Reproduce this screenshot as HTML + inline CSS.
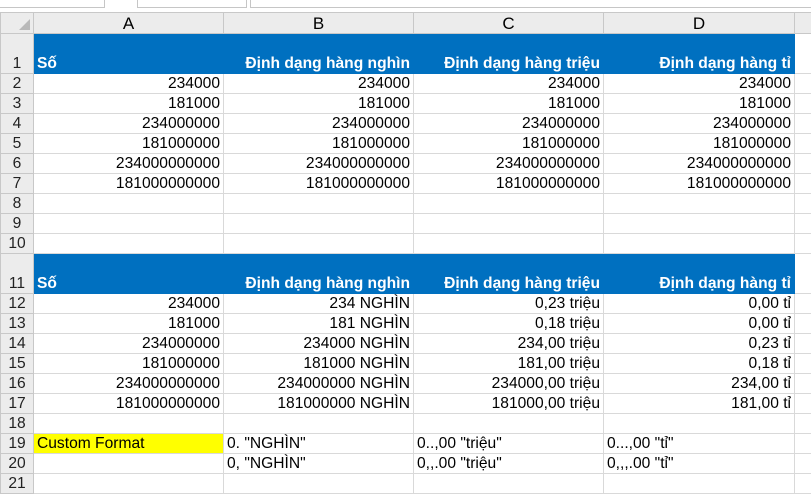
<!DOCTYPE html>
<html><head><meta charset="utf-8"><style>
body{margin:0;width:811px;height:496px;overflow:hidden;background:#fff;font-family:"Liberation Sans",Arial,sans-serif;font-size:15.6px;color:#000;position:relative}
.top{position:absolute;left:0;top:0;width:811px;height:12px;background:#fff;border-bottom:1px solid #bdbdbd}
.top div{position:absolute;top:-2px;height:8px;border:1px solid #c6c6c6;background:#fff}
table{position:absolute;left:0;top:12px;border-collapse:collapse;table-layout:fixed;width:812px}
td{border:1px solid #d9d9d9;padding:0 3px;height:19px;white-space:nowrap;overflow:hidden;line-height:19px;vertical-align:bottom}
td.rh{background:#ececec;text-align:center;color:#222;border-color:#c8c8c8;padding:0}
tr.ch td{background:#ececec;text-align:center;border-color:#c8c8c8;height:20px;font-size:17px;vertical-align:middle}
tr.ch td.corner{position:relative}
.corner:after{content:"";position:absolute;right:3px;bottom:3px;border-style:solid;border-width:0 0 11px 11px;border-color:transparent transparent #b9b9b9 transparent}
tr.blue td.b{background:#0070c0;color:#fff;font-weight:bold;border-color:#0070c0;text-align:right}
tr.blue td{height:39px}
td.r{text-align:right}
td.y{background:#ffff00}
</style></head><body>
<div class="top"><div style="left:-2px;width:105px"></div><div style="left:137px;width:108px"></div><div style="left:250px;width:560px"></div></div>
<table>
<colgroup><col style="width:33px"><col style="width:190px"><col style="width:190px"><col style="width:190px"><col style="width:191px"><col style="width:18px"></colgroup>
<tr class="ch"><td class="corner"></td><td>A</td><td>B</td><td>C</td><td>D</td><td></td></tr>
<tr class="blue"><td class="rh">1</td><td class="b" style="text-align:left">Số</td><td class="b">Định dạng hàng nghìn</td><td class="b">Định dạng hàng triệu</td><td class="b">Định dạng hàng tỉ</td><td></td></tr>
<tr><td class="rh">2</td><td class="r">234000</td><td class="r">234000</td><td class="r">234000</td><td class="r">234000</td><td></td></tr>
<tr><td class="rh">3</td><td class="r">181000</td><td class="r">181000</td><td class="r">181000</td><td class="r">181000</td><td></td></tr>
<tr><td class="rh">4</td><td class="r">234000000</td><td class="r">234000000</td><td class="r">234000000</td><td class="r">234000000</td><td></td></tr>
<tr><td class="rh">5</td><td class="r">181000000</td><td class="r">181000000</td><td class="r">181000000</td><td class="r">181000000</td><td></td></tr>
<tr><td class="rh">6</td><td class="r">234000000000</td><td class="r">234000000000</td><td class="r">234000000000</td><td class="r">234000000000</td><td></td></tr>
<tr><td class="rh">7</td><td class="r">181000000000</td><td class="r">181000000000</td><td class="r">181000000000</td><td class="r">181000000000</td><td></td></tr>
<tr><td class="rh">8</td><td></td><td></td><td></td><td></td><td></td></tr>
<tr><td class="rh">9</td><td></td><td></td><td></td><td></td><td></td></tr>
<tr><td class="rh">10</td><td></td><td></td><td></td><td></td><td></td></tr>
<tr class="blue"><td class="rh">11</td><td class="b" style="text-align:left">Số</td><td class="b">Định dạng hàng nghìn</td><td class="b">Định dạng hàng triệu</td><td class="b">Định dạng hàng tỉ</td><td></td></tr>
<tr><td class="rh">12</td><td class="r">234000</td><td class="r">234 NGHÌN</td><td class="r">0,23 triệu</td><td class="r">0,00 tỉ</td><td></td></tr>
<tr><td class="rh">13</td><td class="r">181000</td><td class="r">181 NGHÌN</td><td class="r">0,18 triệu</td><td class="r">0,00 tỉ</td><td></td></tr>
<tr><td class="rh">14</td><td class="r">234000000</td><td class="r">234000 NGHÌN</td><td class="r">234,00 triệu</td><td class="r">0,23 tỉ</td><td></td></tr>
<tr><td class="rh">15</td><td class="r">181000000</td><td class="r">181000 NGHÌN</td><td class="r">181,00 triệu</td><td class="r">0,18 tỉ</td><td></td></tr>
<tr><td class="rh">16</td><td class="r">234000000000</td><td class="r">234000000 NGHÌN</td><td class="r">234000,00 triệu</td><td class="r">234,00 tỉ</td><td></td></tr>
<tr><td class="rh">17</td><td class="r">181000000000</td><td class="r">181000000 NGHÌN</td><td class="r">181000,00 triệu</td><td class="r">181,00 tỉ</td><td></td></tr>
<tr><td class="rh">18</td><td></td><td></td><td></td><td></td><td></td></tr>
<tr><td class="rh">19</td><td class="y">Custom Format</td><td>0. "NGHÌN"</td><td>0..,00 "triệu"</td><td>0...,00 "tỉ"</td><td></td></tr>
<tr><td class="rh">20</td><td></td><td>0, "NGHÌN"</td><td>0,,.00 "triệu"</td><td>0,,,.00 "tỉ"</td><td></td></tr>
<tr><td class="rh">21</td><td></td><td></td><td></td><td></td><td></td></tr>
</table>
</body></html>
